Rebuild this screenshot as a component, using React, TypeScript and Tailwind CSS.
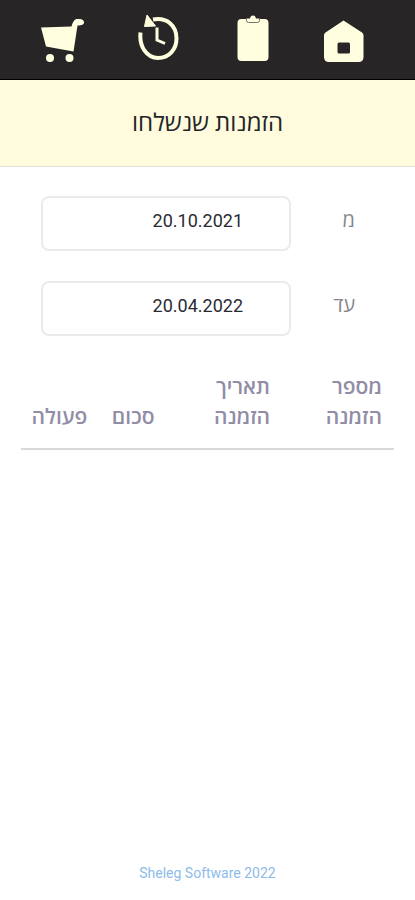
const navItems = [
  {
    label: 'בית',
    icon: (
      <svg width="41" height="43" viewBox="0 0 41 43" fill="#ffffe0">
        <path
          fillRule="evenodd"
          d="M20.500 0.500 39 12.500Q40.500 13.500 40.500 15.500V37Q40.500 42 35.500 42H6Q1 42 1 37V15.500Q1 13.500 2.500 12.500ZM16 22.500Q14.500 22.500 14.500 24V32Q14.500 33.500 16 33.500H25.500Q27 33.500 27 32V24Q27 22.500 25.500 22.500Z"
        />
      </svg>
    ),
  },
  {
    label: 'הזמנות',
    icon: (
      <svg width="32" height="49" viewBox="0 0 32 49">
        <rect x="0.500" y="5" width="31" height="42" rx="4" fill="#ffffe0" />
        <path
          d="M9.500 4.500H13Q13.500 1.500 16 1.500T19 4.500H22.500V6.500Q22.500 8.500 20.500 8.500H11.500Q9.500 8.500 9.500 6.500Z"
          fill="#ffffe0"
        />
        <path d="M9.500 5V6.500Q9.500 8.500 11.500 8.500H20.500Q22.500 8.500 22.500 6.500V5" fill="none" stroke="#77756a" />
      </svg>
    ),
  },
  {
    label: 'היסטוריה',
    icon: (
      <svg width="44" height="49" viewBox="0 0 44 49" fill="none" stroke="#ffffe0">
        <path d="M2.500 18.500C1 33 9 44 20 44C31 44 38.500 35.500 38.500 24.500C38.500 11.500 29 3 15 5.500" strokeWidth="4" />
        <path d="M9 1 17.500 12 6.500 12.500Z" fill="#ffffe0" strokeWidth="1" />
        <path d="M19 13.500V26L27 29.500" strokeWidth="3" />
      </svg>
    ),
  },
  {
    label: 'עגלה',
    icon: (
      <svg width="43" height="45" viewBox="0 0 43 45" fill="#ffffe0">
        <path d="M0 9.500 30.500 8.500C32 3 34 0.500 37 1C41 0.500 43 2 43 4.500C43 6.500 41 7.500 36.500 7.500L32.500 33.500 5 28.500Z" />
        <circle cx="9" cy="40" r="4" />
        <circle cx="28.500" cy="40" r="4" />
      </svg>
    ),
  },
];

const fields = [
  { id: 'from', label: 'מ', value: '20.10.2021' },
  { id: 'to', label: 'עד', value: '20.04.2022' },
];

const columns = [
  { title: 'מספר הזמנה', width: 'w-[30%]' },
  { title: 'תאריך הזמנה', width: 'w-[31%]' },
  { title: 'סכום', width: 'w-[18%]' },
  { title: 'פעולה', width: 'w-[21%]' },
];

export default function App() {
  return (
    <div
      dir="rtl"
      className="flex min-h-screen flex-col bg-white font-[Roboto,'Open_Sans',sans-serif] text-[#212529]"
    >
      <nav className="flex h-20 items-end justify-between border-b border-black bg-[#272526] pr-[51px] pb-4 pl-[41px]">
        {navItems.map((item) => (
          <button key={item.label} type="button" aria-label={item.label}>
            {item.icon}
          </button>
        ))}
      </nav>

      <header className="flex h-[87px] items-center justify-center border-b border-[#e3e3dc] bg-[#fffbdc]">
        <h1 className="text-2xl">הזמנות שנשלחו</h1>
      </header>

      <form className="flex flex-col gap-[30px] pt-[29px] pr-[60px] pl-[41px]">
        {fields.map((field) => (
          <div key={field.id} className="flex">
            <label htmlFor={field.id} className="w-16 pt-2.5 text-xl text-[#85858c]">
              {field.label}
            </label>
            <input
              id={field.id}
              type="text"
              defaultValue={field.value}
              className="h-[55px] min-w-0 flex-1 rounded-lg border-2 border-[#ebebeb] pr-[46px] pb-1.5 text-right text-lg text-[#2b2a33]"
            />
          </div>
        ))}
      </form>

      <div className="px-[21px] pt-9">
        <table className="w-full table-fixed border-b-2 border-[#d9d9d9]">
          <thead>
            <tr>
              {columns.map((column) => (
                <th
                  key={column.title}
                  scope="col"
                  className={`${column.width} pr-3 pb-4 pl-2 text-right align-bottom text-[21px] leading-[30px] font-semibold text-[#918da6]`}
                >
                  {column.title}
                </th>
              ))}
            </tr>
          </thead>
          <tbody />
        </table>
      </div>

      <footer className="mt-auto pb-[17px] text-center text-sm text-[#8dbbea]">
        <a href="#" dir="ltr">Sheleg Software 2022</a>
      </footer>
    </div>
  );
}
